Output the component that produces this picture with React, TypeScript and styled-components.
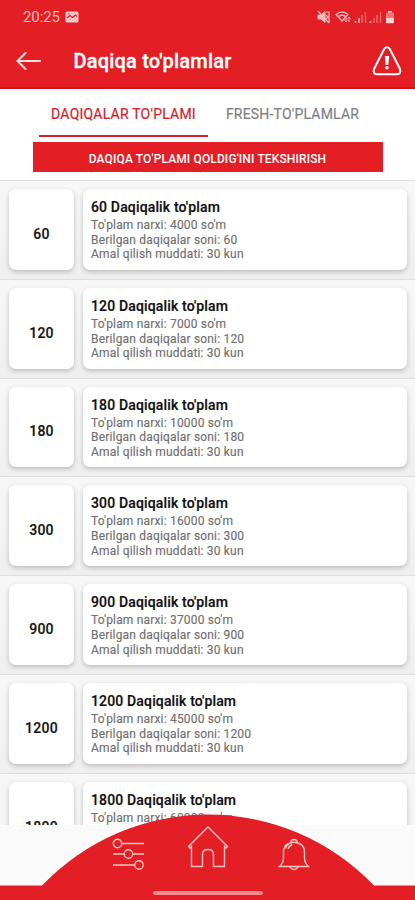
import React from 'react';
import styled, { createGlobalStyle } from 'styled-components';

const RED = '#e41e25';

const GlobalStyle = createGlobalStyle`
  * { box-sizing: border-box; }
  body { margin: 0; background: #fafafa; font-family: Roboto, "Liberation Sans", sans-serif; }
`;

const Screen = styled.div`
  width: 415px;
  height: 900px;
  display: flex;
  flex-direction: column;
  overflow: hidden;
  background: #fafafa;
`;

const Header = styled.header`
  height: 89px;
  flex: none;
  background: ${RED};
  border-bottom: 2px solid #dc0f14;
  color: #fff;
`;

const StatusBar = styled.div`
  height: 34px;
  padding: 0 18px 0 23px;
  display: flex;
  align-items: center;
  justify-content: space-between;
  color: #ffb9ba;
`;

const Clock = styled.div`
  display: flex;
  align-items: center;
  gap: 5px;
  font-size: 15px;
  letter-spacing: -0.1px;
`;

const StatusIcons = styled.svg`
  display: block;
`;

const TitleBar = styled.div`
  height: 53px;
  padding: 0 13px 0 16px;
  display: flex;
  align-items: center;
`;

const Title = styled.h1`
  flex: 1;
  margin: 1px 0 0 31.5px;
  font-size: 20px;
  font-weight: 500;
  line-height: 24px;
  letter-spacing: 0.2px;
  -webkit-text-stroke: 0.3px #fff;
`;

const TabPanel = styled.section`
  flex: none;
  height: 91px;
  background: #fff;
  display: flex;
  flex-direction: column;
  align-items: center;
`;

const Tabs = styled.nav`
  width: 100%;
  height: 48px;
  padding-left: 39px;
  display: flex;
`;

const Tab = styled.div<{ $active?: boolean; $width: number }>`
  width: ${p => p.$width}px;
  text-align: center;
  font-size: 14px;
  line-height: 16px;
  padding-top: 17px;
  white-space: nowrap;
  letter-spacing: ${p => (p.$active ? '0.22px' : '0.2px')};
  color: ${p => (p.$active ? '#d3212b' : '#7f7f86')};
  -webkit-text-stroke: 0.2px currentColor;
  border-bottom: 2px solid ${p => (p.$active ? '#cf202b' : 'transparent')};
`;

const CheckButton = styled.button`
  margin: 5px 0 0;
  width: 350px;
  height: 30px;
  border: 0;
  padding: 3px 0 0;
  background: ${RED};
  color: #fff;
  font: 500 12px/14px Roboto, sans-serif;
  letter-spacing: 0.13px;
`;

const List = styled.main`
  height: 645px;
  flex: none;
  overflow: hidden;
`;

const Row = styled.article`
  height: 98.8px;
  padding: 8px 8px 9px 9px;
  display: flex;
  gap: 9px;
  background: linear-gradient(#f7f7f7, #f5f5f5 40%, #efefef);
  border-top: 1px solid #dedede;
`;

const Card = styled.div`
  background: #fff;
  border-radius: 7px;
  box-shadow: 0 2px 5px rgba(0, 0, 0, 0.22);
`;

const CountCard = styled(Card)`
  width: 65px;
  flex: none;
  display: flex;
  align-items: center;
  justify-content: center;
  padding-top: 9px;
  font-size: 14px;
  font-weight: 500;
  letter-spacing: 0.25px;
  color: #151515;
  -webkit-text-stroke: 0.2px currentColor;
`;

const InfoCard = styled(Card)`
  flex: 1;
  padding: 10px 8px 0;
`;

const PackTitle = styled.h2`
  margin: 0 0 3px;
  font-size: 14px;
  line-height: 16px;
  font-weight: 500;
  letter-spacing: 0.15px;
  color: #111;
  -webkit-text-stroke: 0.2px currentColor;
`;

const Detail = styled.p`
  margin: 0;
  font-size: 12px;
  line-height: 14.7px;
  letter-spacing: 0.18px;
  color: #707070;
  -webkit-text-stroke: 0.15px currentColor;
`;

const BottomNav = styled.footer`
  position: relative;
  flex: none;
  height: 86px;
  margin-top: -11px;
`;

const Dome = styled.svg`
  position: absolute;
  inset: 0;
`;

const NavItems = styled.div`
  position: relative;
  height: 76px;
  padding: 10px 105px 0 112px;
  display: grid;
  grid-template-columns: 75px 91px 32px;
  align-items: flex-start;
`;

const NavIcon = styled.svg<{ $top: number }>`
  margin-top: ${p => p.$top}px;
  fill: none;
  stroke: #ffc3c3;
  stroke-width: 1.4;
`;

const HomeIndicator = styled.div`
  position: relative;
  width: 110px;
  height: 4px;
  margin: 1px auto 0;
  border-radius: 2px;
  background: #f98a8d;
`;

const packs = [
  { count: 60, price: 4000 },
  { count: 120, price: 7000 },
  { count: 180, price: 10000 },
  { count: 300, price: 16000 },
  { count: 900, price: 37000 },
  { count: 1200, price: 45000 },
  { count: 1800, price: 60000 },
];

export default function App() {
  return (
    <Screen>
      <GlobalStyle />
      <Header>
        <StatusBar>
          <Clock>
            20:25
            <svg width="14" height="12" viewBox="0 0 14 12">
              <rect x=".5" y=".5" width="13" height="11" rx="1.5" fill="#ffc4c5" />
              <path d="M2 7l3-2.500 2.500 2L10.500 4 12 5.500" fill="none" stroke={RED} strokeWidth="1.2" />
              <circle cx="4" cy="3" r=".8" fill={RED} />
            </svg>
          </Clock>
          <StatusIcons width="80" height="14" viewBox="0 0 80 14" fill="none" stroke="#ffb9ba">
            <path d="M1 5h3l4-3.500v11L4 9H1z" fill="#ffb9ba" />
            <path d="M1 1l11 12M9 2h3v11M9 5l2 2-2 2" strokeWidth="1.2" />
            <path d="M19 4.500q6-5 12 0L25 11zM21.500 6.500q3.500-2.500 7 0" strokeWidth="1.300" />
            <path d="M29 7v5m-1.500-1.500L29 12l1.500-1.500M32 12V7m-1.500 1.500L32 7l1.500 1.500" strokeWidth="1" />
            <path d="M38.500 11v2M42 8v5M53.500 11v2" strokeWidth="1.500" />
            <path d="M45 5v8M48.500 2v11M57 8v5M60 5v8M63.500 2v11" strokeWidth="1.400" opacity=".5" />
            <rect x="69" y="2.500" width="8" height="11" rx="1" fill="#ffb9ba" opacity=".55" stroke="none" />
            <path d="M71 1h4v1.500h-4zM69 8h8v5h-8z" fill="#ffd6d6" stroke="none" />
          </StatusIcons>
        </StatusBar>
        <TitleBar>
          <svg width="26" height="18" viewBox="0 0 26 18" fill="none" stroke="#ffe1e1" strokeWidth="2" strokeLinecap="round">
            <path d="M9.500 1L1.500 9l8 8M2 9h22" />
          </svg>
          <Title>Daqiqa to'plamlar</Title>
          <svg width="30" height="30" viewBox="0 0 30 30" fill="none" stroke="#fff" strokeWidth="2" strokeLinejoin="round">
            <path d="M12.200 3Q15 -.5 17.800 3L28 23Q29.500 28 25 28.300H5Q.5 28 2 23z" />
            <path d="M12.800 10h4.400l-1 9h-2.400z" fill="#fff" stroke="none" />
            <circle cx="15" cy="21.800" r="1.700" fill="#fff" stroke="none" />
          </svg>
        </TitleBar>
      </Header>
      <TabPanel>
        <Tabs>
          <Tab $active $width={169}>DAQIQALAR TO'PLAMI</Tab>
          <Tab $width={169}>FRESH-TO'PLAMLAR</Tab>
        </Tabs>
        <CheckButton>DAQIQA TO'PLAMI QOLDIG'INI TEKSHIRISH</CheckButton>
      </TabPanel>
      <List>
        {packs.map(p => (
          <Row key={p.count}>
            <CountCard>{p.count}</CountCard>
            <InfoCard>
              <PackTitle>{p.count} Daqiqalik to'plam</PackTitle>
              <Detail>To'plam narxi: {p.price} so'm</Detail>
              <Detail>Berilgan daqiqalar soni: {p.count}</Detail>
              <Detail>Amal qilish muddati: 30 kun</Detail>
            </InfoCard>
          </Row>
        ))}
      </List>
      <BottomNav>
        <Dome width="415" height="86" viewBox="0 0 415 86">
          <path d="M0 71.500H42A229.600 229.600 0 0 1 374 71.500H415V86H0z" fill={RED} />
        </Dome>
        <NavItems>
          <NavIcon $top={14} width="33" height="33" viewBox="0 0 33 33">
            <circle cx="5.500" cy="5.500" r="4.200" />
            <circle cx="16.500" cy="16" r="4.200" />
            <circle cx="27" cy="27" r="4.200" />
            <path d="M10 5.500h22M1 16h11M21 16h11M1 27h21.500" />
          </NavIcon>
          <NavIcon $top={1} width="42" height="44" viewBox="0 0 42 44">
            <path d="M1.500 21.500L21 2l19.500 19.500-1.500 1.500-1.500-1.500V41.500H26.500V29.500q0-5-5.500-5t-5.500 5v12H4.500V21.500L3 23z" />
          </NavIcon>
          <NavIcon $top={14} width="32" height="34" viewBox="0 0 32 34">
            <path d="M21.500 5.500q5 2.500 5 8.500v6q0 5 4 8.500H1.500q4-3.500 4-8.500v-6q0-6 5-8.500" />
            <path d="M12 28.500q1 3 4 3t4-3M12.500 5q.5-3.500 3.500-3.500T19.500 5q-3.500-1.500-7 0zM7.500 10.500q1-4 5-5.500M10 11q1-3 4-4.500M19.500 5l2 .5" />
          </NavIcon>
        </NavItems>
        <HomeIndicator />
      </BottomNav>
    </Screen>
  );
}
